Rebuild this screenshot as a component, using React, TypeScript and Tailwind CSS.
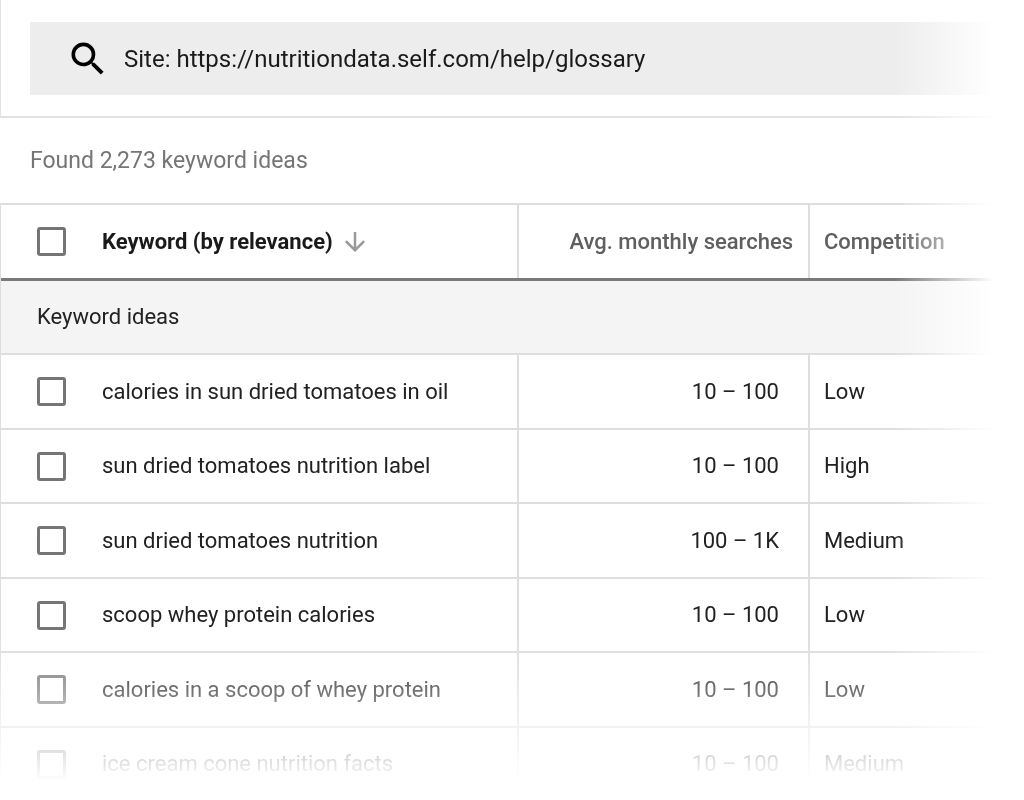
import { MdArrowDownward, MdSearch } from 'react-icons/md';

interface KeywordIdea {
  keyword: string;
  searches: string;
  competition: string;
}

const ideas: KeywordIdea[] = [
  { keyword: 'calories in sun dried tomatoes in oil', searches: '10 – 100', competition: 'Low' },
  { keyword: 'sun dried tomatoes nutrition label', searches: '10 – 100', competition: 'High' },
  { keyword: 'sun dried tomatoes nutrition', searches: '100 – 1K', competition: 'Medium' },
  { keyword: 'scoop whey protein calories', searches: '10 – 100', competition: 'Low' },
  { keyword: 'calories in a scoop of whey protein', searches: '10 – 100', competition: 'Low' },
  { keyword: 'ice cream cone nutrition facts', searches: '10 – 100', competition: 'Medium' }
];

const Checkbox: React.FC<{ label: string }> = ({ label }) => (
  <input
    type="checkbox"
    aria-label={label}
    className="size-[29px] shrink-0 appearance-none rounded-[3px] border-3 border-[#757575] checked:bg-[#757575]"
  />
);

const SearchBar = () => (
  <div className="border-b-2 border-l border-[#e2e2e2] pt-[22px] pb-[21px] pl-[29px]">
    <label className="flex h-[73px] items-center gap-[14px] bg-[#ededed] pl-9">
      <MdSearch className="size-11 shrink-0 text-black" />
      <input
        type="text"
        aria-label="Site"
        defaultValue="Site: https://nutritiondata.self.com/help/glossary"
        className="min-w-0 flex-1 bg-transparent text-2xl text-[#1a1a1a] outline-none"
      />
    </label>
  </div>
);

const IdeasTable = () => (
  <table className="w-full table-fixed border-separate border-spacing-0 border-t-2 border-l border-[#dedede] text-left text-[22px] leading-8">
    <colgroup>
      <col className="w-[518px]" />
      <col className="w-[291px]" />
      <col />
    </colgroup>
    <thead>
      <tr className="h-[73px]">
        <th className="border-r-2 border-[#dedede] pl-9">
          <div className="flex items-center gap-9">
            <Checkbox label="Select all keywords" />
            <button type="button" className="flex items-center gap-[7px] font-bold text-[#1a1a1a]">
              Keyword (by relevance)
              <MdArrowDownward className="size-[30px] text-[#999]" />
            </button>
          </div>
        </th>
        <th className="border-r-2 border-[#dedede] pr-[15px] text-right font-medium text-[#5f5f5f]">
          Avg. monthly searches
        </th>
        <th className="pl-[14px] font-medium text-[#5f5f5f]">Competition</th>
      </tr>
    </thead>
    <tbody className="text-[#212121]">
      <tr className="h-[77px] bg-[#f4f4f4]">
        <th
          colSpan={3}
          scope="rowgroup"
          className="border-t-3 border-b-2 border-t-[#7a7a7a] border-b-[#dedede] pl-9 font-normal"
        >
          Keyword ideas
        </th>
      </tr>
      {ideas.map(({ keyword, searches, competition }) => (
        <tr key={keyword} className="group h-[74px] even:h-[75px] last:h-[72px]">
          <td className="border-r-2 border-b-2 border-[#dedede] pl-9 group-last:border-b-0">
            <label className="flex items-center gap-9">
              <Checkbox label={keyword} />
              {keyword}
            </label>
          </td>
          <td className="border-r-2 border-b-2 border-[#dedede] pr-[29px] text-right group-last:border-b-0">
            {searches}
          </td>
          <td className="border-b-2 border-[#dedede] pl-[14px] group-last:border-b-0">
            {competition}
          </td>
        </tr>
      ))}
    </tbody>
  </table>
);

const App = () => {
  return (
    <div className="bg-white">
      {/* the planner dissolves into the page on its right and bottom edges */}
      <main className="overflow-hidden mask-r-from-[calc(100%-130px)] mask-r-to-[calc(100%-30px)] mask-b-from-[calc(100%-162px)] mask-b-to-[calc(100%-18px)] font-['Roboto',sans-serif]">
        <SearchBar />
        <p className="flex h-[85px] items-center pl-[30px] text-[23px] leading-8 text-[#757575]">
          Found 2,273 keyword ideas
        </p>
        <IdeasTable />
      </main>
    </div>
  );
};

export default App;
